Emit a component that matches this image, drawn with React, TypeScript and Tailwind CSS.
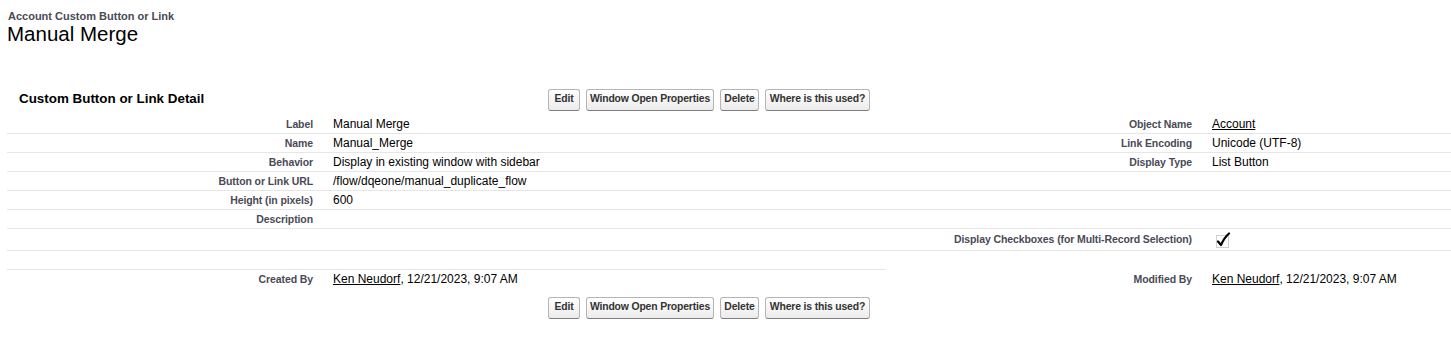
import React from 'react';

const font = { fontFamily: '"Liberation Sans", Arial, Helvetica, sans-serif' };

const buttons = [
    { label: 'Edit', w: 'w-[32px]' },
    { label: 'Window Open Properties', w: 'w-[128px]' },
    { label: 'Delete', w: 'w-[39px]' },
    { label: 'Where is this used?', w: 'w-[105px]' },
];

function Buttons() {
    return (
        <div className="flex items-center gap-[6px]">
            {buttons.map(b => (
                <button
                    key={b.label}
                    className={`${b.w} h-[22px] px-0 rounded-[3px] border border-[#b5b5b5] border-b-[#7f7f7f] bg-gradient-to-b from-white to-[#ececec] text-[10.4px] tracking-[-0.15px] font-bold text-[#333] leading-none whitespace-nowrap`}
                >
                    {b.label}
                </button>
            ))}
        </div>
    );
}

function CheckedBox() {
    return (
        <svg width="16" height="16" viewBox="0 0 16 16">
            <rect x="1.5" y="3.5" width="12" height="12" fill="none" stroke="#a0a0a0" strokeWidth="1" strokeDasharray="1 1" />
            <path d="M3 9.5 L6 13 C8 8.5 10.5 4.5 14 1.5" fill="none" stroke="#000" strokeWidth="2.2" strokeLinejoin="round" strokeLinecap="round" />
        </svg>
    );
}

type Cell = React.ReactNode;

function Row({ l1, v1, l2, v2, h = 'h-[19px]', line = 'full' }: { l1?: Cell; v1?: Cell; l2?: Cell; v2?: Cell; h?: string; line?: 'full' | 'left' | 'none' }) {
    const left = line === 'full' || line === 'left' ? 'border-b border-[#e6e6e6]' : '';
    const right = line === 'full' ? 'border-b border-[#e6e6e6]' : '';
    const label = 'pr-[10px] pt-[1px] flex items-center justify-end text-[10.5px] tracking-[-0.1px] font-bold text-[#4a4a56] whitespace-nowrap';
    const value = 'pl-[10px] flex items-center text-[12px] text-black whitespace-nowrap';
    return (
        <div className={`flex ${h}`}>
            <div className={`w-[316px] shrink-0 ${label} ${left}`}>{l1}</div>
            <div className={`w-[563px] shrink-0 ${value} ${left}`}>{v1}</div>
            <div className={`w-[316px] shrink-0 ${label} ${right}`}>{l2}</div>
            <div className={`flex-1 ${value} ${right}`}>{v2}</div>
        </div>
    );
}

export default function App() {
    return (
        <div className="w-full h-[344px] bg-white overflow-hidden" style={font}>
            {/* page title */}
            <div className="pl-[8px] pt-[10px]">
                <div className="text-[11px] font-bold text-[#4a4a56] leading-[13px]">Account Custom Button or Link</div>
                <div className="text-[20.5px] text-black leading-[22px] -ml-[1px]">Manual Merge</div>
            </div>

            {/* detail block */}
            <div className="ml-[7px] mt-[39px]">
                <div className="flex items-center h-[31px]">
                    <div className="w-[541px] shrink-0 pl-[12px] text-[13.4px] font-bold text-black">Custom Button or Link Detail</div>
                    <Buttons />
                </div>

                <Row l1="Label" v1="Manual Merge" l2="Object Name" v2={<span className="underline">Account</span>} />
                <Row l1="Name" v1="Manual_Merge" l2="Link Encoding" v2="Unicode (UTF-8)" />
                <Row l1="Behavior" v1="Display in existing window with sidebar" l2="Display Type" v2="List Button" />
                <Row l1="Button or Link URL" v1="/flow/dqeone/manual_duplicate_flow" />
                <Row l1="Height (in pixels)" v1="600" />
                <Row l1="Description" />
                <Row h="h-[22px]" l2="Display Checkboxes (for Multi-Record Selection)" v2={<span className="ml-[3px] mt-[1px] flex"><CheckedBox /></span>} />
                <Row line="left" />
                <Row
                    h="h-[18px]"
                    line="none"
                    l1="Created By"
                    v1={<span><span className="underline">Ken Neudorf</span>, 12/21/2023, 9:07 AM</span>}
                    l2="Modified By"
                    v2={<span><span className="underline">Ken Neudorf</span>, 12/21/2023, 9:07 AM</span>}
                />

                <div className="flex h-[31px] items-center mt-[4px]">
                    <div className="w-[541px] shrink-0" />
                    <Buttons />
                </div>
            </div>
        </div>
    );
}
